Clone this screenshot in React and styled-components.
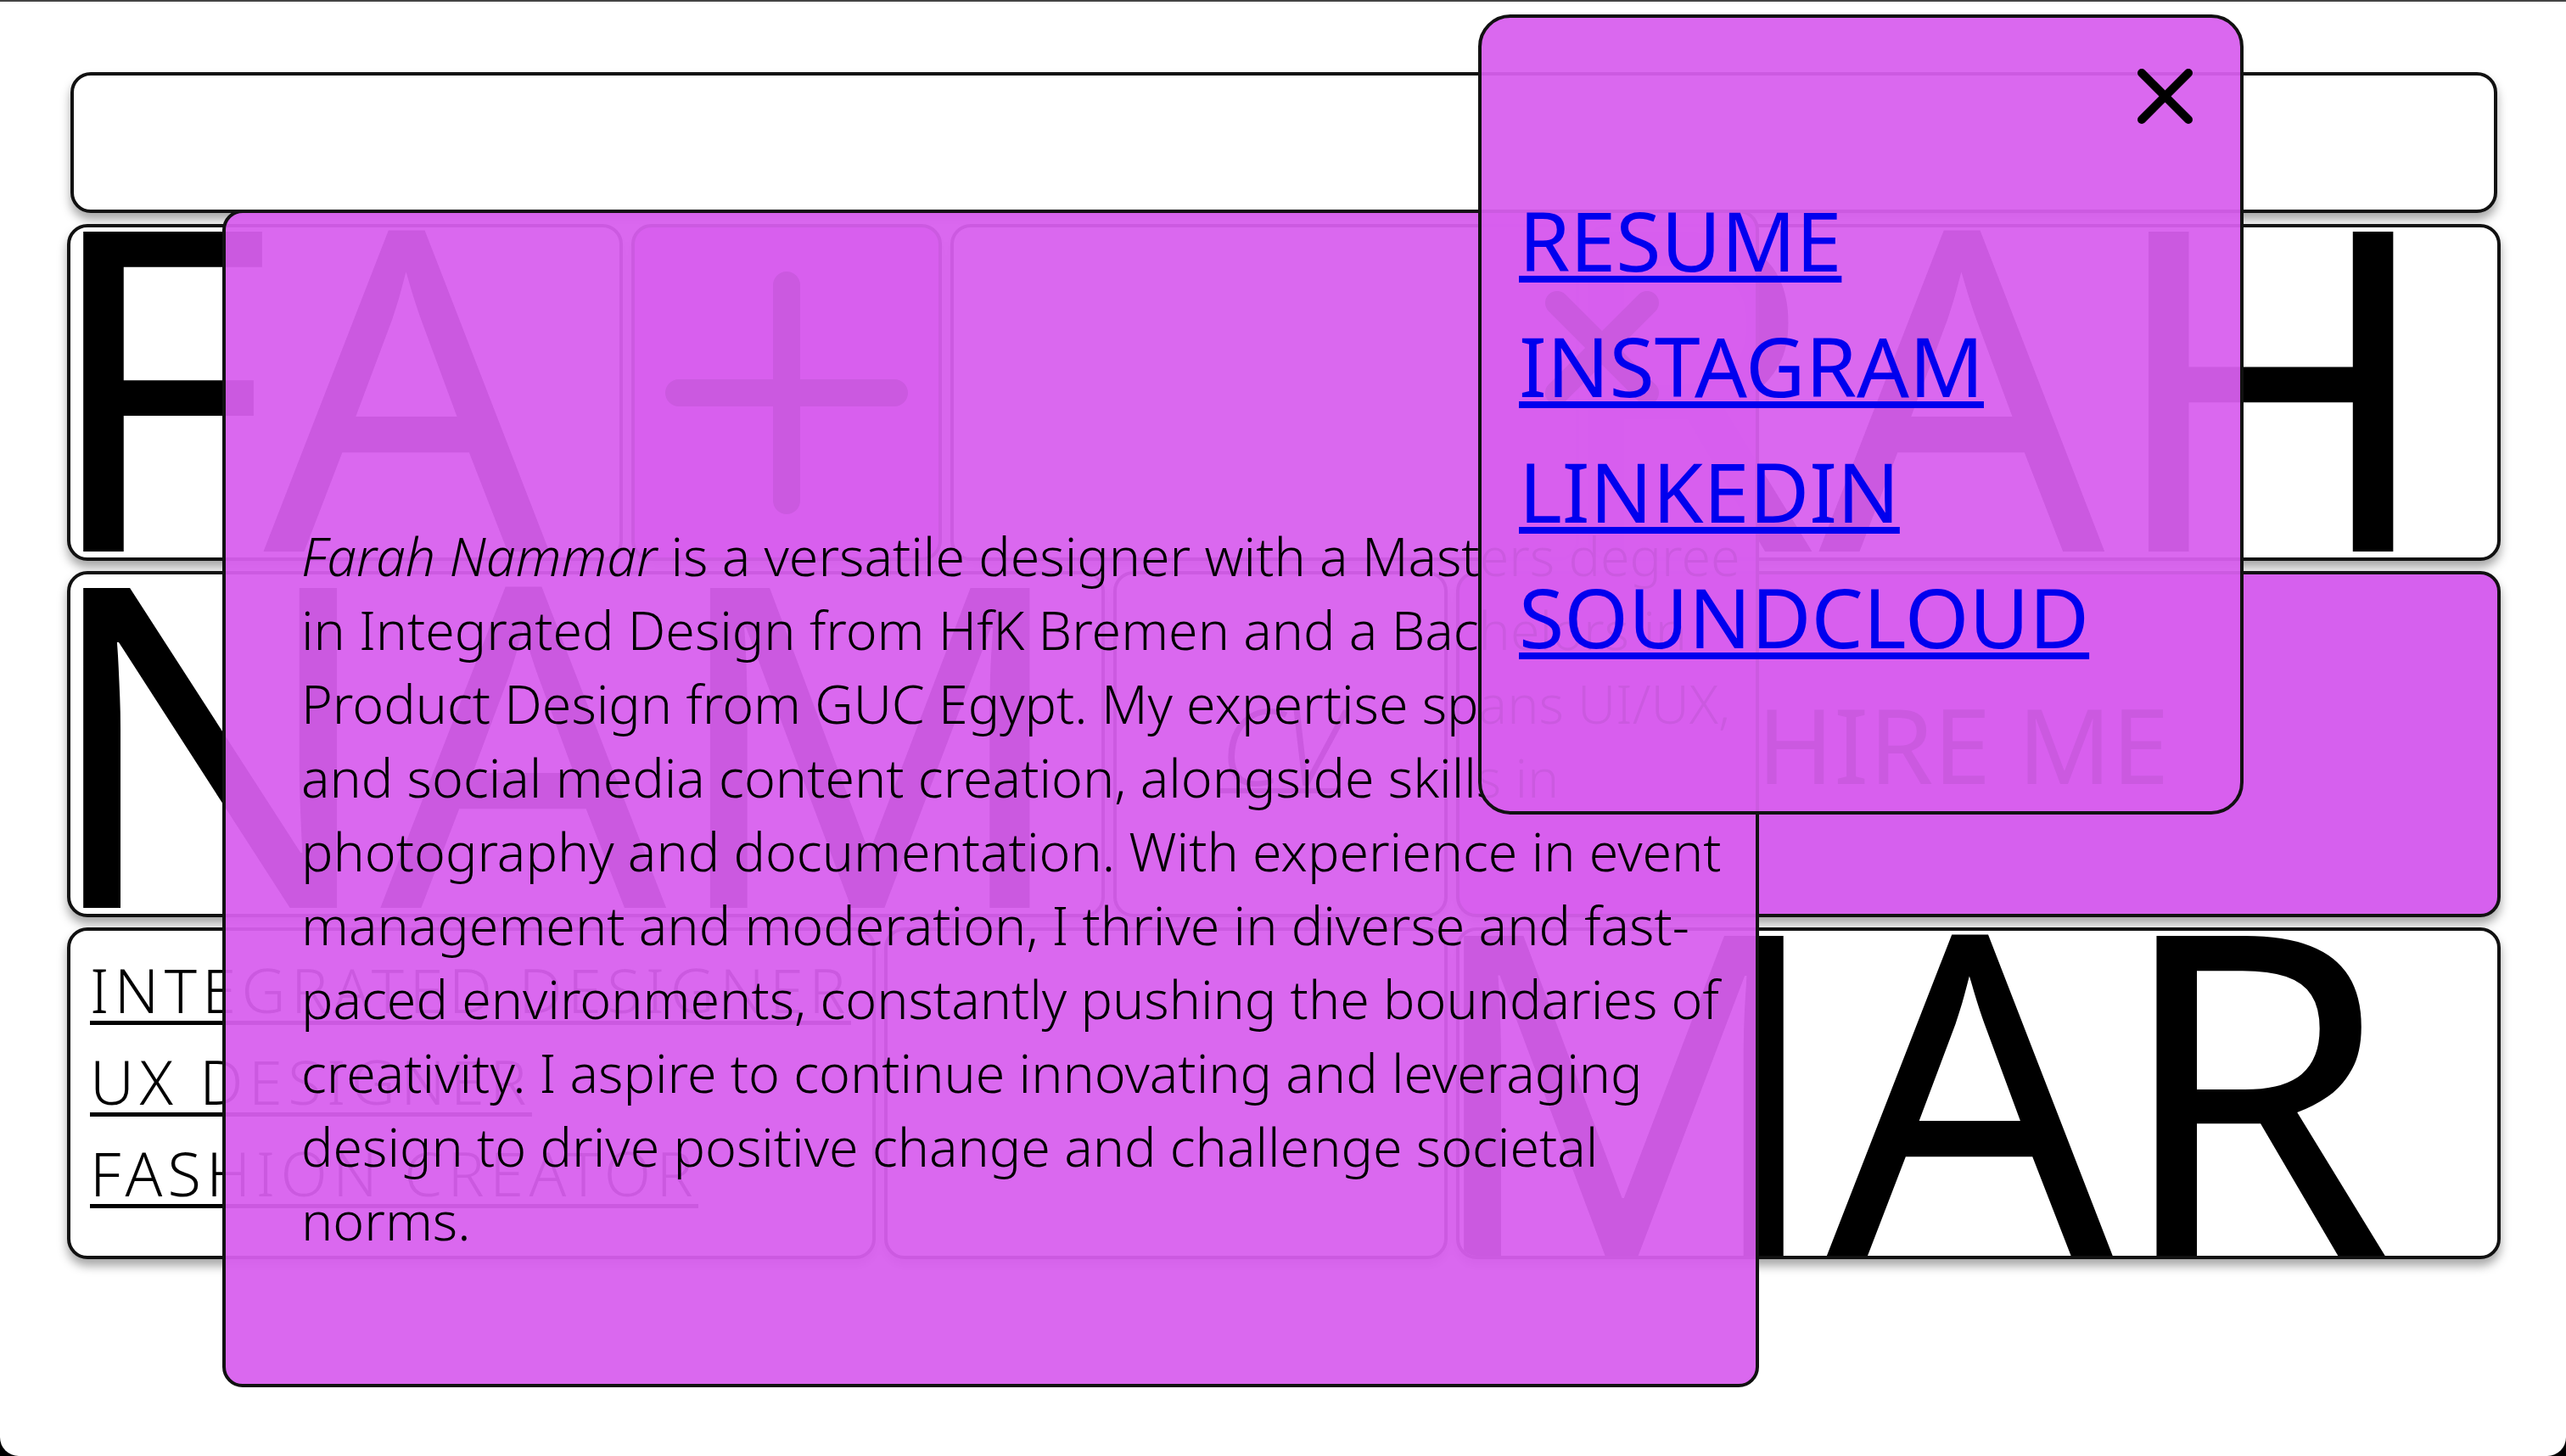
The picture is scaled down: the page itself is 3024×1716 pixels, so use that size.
import React from 'react';
import styled, { createGlobalStyle } from 'styled-components';

const MAGENTA = '#d660ee';
const VEIL = 'rgba(216, 95, 238, 0.94)';
const INK = '#111';

const GlobalStyle = createGlobalStyle`
  html, body {
    margin: 0;
    padding: 0;
    background: #000;
  }
  body {
    font-family: 'Noto Sans', 'Open Sans', sans-serif;
  }
  *, *::before, *::after {
    box-sizing: border-box;
  }
`;

const Screen = styled.div`
  position: relative;
  width: 3024px;
  height: 1716px;
  overflow: hidden;
  padding: 83px 77px 0 79px;
  background: #fff;
  border-top: 2px solid #444;
  border-radius: 0 0 22px 22px;
`;

const TopBar = styled.header`
  height: 166px;
  margin: 0 4px 13px;
  background: #fff;
  border: 4px solid ${INK};
  border-radius: 24px;
  box-shadow: 0 8px 12px rgba(0, 0, 0, 0.35);
`;

const Grid = styled.main`
  display: flex;
  flex-direction: column;
  gap: 12px;
`;

const Row = styled.div`
  display: flex;
  gap: 10px;
  height: ${(p) => p.$h}px;
`;

const Cell = styled.div`
  flex: 0 0 ${(p) => p.$w}px;
  display: flex;
  align-items: ${(p) => p.$align || 'flex-end'};
  justify-content: ${(p) => p.$justify || 'flex-start'};
  overflow: hidden;
  background: ${(p) => p.$bg || '#fff'};
  border: 4px solid ${INK};
  border-radius: 24px;
  box-shadow: 0 8px 12px rgba(0, 0, 0, 0.35);
`;

const Word = styled.span`
  margin-left: ${(p) => p.$shift}px;
  margin-bottom: ${(p) => p.$drop || 0}px;
  font-size: 528px;
  font-weight: 400;
  line-height: 0.8;
  color: #000;
  white-space: nowrap;
`;

const RoleList = styled.nav`
  display: flex;
  flex-direction: column;
  align-items: flex-start;
  padding: 15px 0 0 23px;
`;

const RoleLink = styled.a`
  font-size: 72px;
  font-weight: 300;
  line-height: 108px;
  letter-spacing: 6.4px;
  color: #000;
  text-decoration: underline;
  text-decoration-thickness: 5px;
  text-underline-offset: 9px;
`;

const HireText = styled.span`
  margin-right: 36px;
  font-size: 122px;
  font-weight: 400;
  line-height: 1;
  color: #000;
`;

const CvLink = styled.a`
  font-size: 126px;
  font-style: italic;
  font-weight: 300;
  line-height: 1;
  color: #000;
  text-decoration-thickness: 6px;
`;

const AboutCard = styled.section`
  position: absolute;
  left: 262px;
  top: 245px;
  z-index: 1;
  width: 1811px;
  height: 1388px;
  display: flex;
  flex-direction: column;
  padding: 92px 0 0 89px;
  background: ${VEIL};
  border: 4px solid ${INK};
  border-radius: 24px;
`;

const LinksCard = styled.aside`
  position: absolute;
  left: 1742px;
  top: 15px;
  z-index: 2;
  width: 902px;
  height: 943px;
  display: flex;
  flex-direction: column;
  padding: 60px 0 0 44px;
  background: ${VEIL};
  border: 4px solid ${INK};
  border-radius: 38px;
`;

const CloseButton = styled.button`
  align-self: flex-end;
  display: flex;
  margin-right: ${(p) => p.$right}px;
  padding: 0;
  background: none;
  border: 0;
  cursor: pointer;
`;

const Bio = styled.p`
  margin: 134px 0 0;
  font-size: 62.6px;
  font-weight: 300;
  line-height: 87px;
  color: #000;
`;

const LinkList = styled.nav`
  display: flex;
  flex-direction: column;
  align-items: flex-start;
  margin-top: 62px;
`;

const SocialLink = styled.a`
  font-size: 97px;
  font-weight: 400;
  line-height: 148px;
  color: #0000ee;
  text-decoration: underline;
  text-decoration-thickness: 8px;
  text-underline-offset: 5px;
`;

function CrossIcon({ size, stroke }) {
  const a = stroke / 2;
  const b = size - stroke / 2;
  return (
    <svg width={size} height={size} viewBox={`0 0 ${size} ${size}`} fill="none"
      stroke="#000" strokeWidth={stroke} strokeLinecap="round">
      <path d={`M${a} ${a}L${b} ${b}M${b} ${a}L${a} ${b}`} />
    </svg>
  );
}

function PlusIcon({ size, stroke }) {
  const a = stroke / 2;
  const b = size - stroke / 2;
  const m = size / 2;
  return (
    <svg width={size} height={size} viewBox={`0 0 ${size} ${size}`} fill="none"
      stroke="#000" strokeWidth={stroke} strokeLinecap="round">
      <path d={`M${m} ${a}V${b}M${a} ${m}H${b}`} />
    </svg>
  );
}

const roles = ['INTEGRATED DESIGNER', 'UX DESIGNER', 'FASHION CREATOR'];
const socials = ['RESUME', 'INSTAGRAM', 'LINKEDIN', 'SOUNDCLOUD'];

export default function App() {
  return (
    <>
      <GlobalStyle />
      <Screen>
        <TopBar />
        <Grid>
          <Row $h={397}>
            <Cell $w={655}><Word $shift={-36}>FA</Word></Cell>
            <Cell $w={366} $bg={MAGENTA} $align="center" $justify="center">
              <PlusIcon size={286} stroke={32} />
            </Cell>
            <Cell $w={741} />
            <Cell $w={1076}><Word $shift={-60}>RAH</Word></Cell>
          </Row>
          <Row $h={408}>
            <Cell $w={1223}><Word $shift={-36}>NAM</Word></Cell>
            <Cell $w={394} $align="center" $justify="center">
              <CvLink href="#cv">CV</CvLink>
            </Cell>
            <Cell $w={1231} $bg={MAGENTA} $align="center" $justify="center">
              <HireText>HIRE ME</HireText>
            </Cell>
          </Row>
          <Row $h={391}>
            <Cell $w={953} $align="flex-start">
              <RoleList>
                {roles.map((r) => (
                  <RoleLink key={r} href="#work">{r}</RoleLink>
                ))}
              </RoleList>
            </Cell>
            <Cell $w={664} />
            <Cell $w={1231}><Word $shift={-46} $drop={-7}>MAR</Word></Cell>
          </Row>
        </Grid>

        <AboutCard>
          <CloseButton $right={114} aria-label="Close">
            <CrossIcon size={134} stroke={28} />
          </CloseButton>
          <Bio>
            <em>Farah Nammar</em> is a versatile designer with a Masters degree in Integrated
            Design from HfK Bremen and a Bachelors in Product Design from GUC Egypt. My
            expertise spans UI/UX, and social media content creation, alongside skills in
            photography and documentation. With experience in event management and
            moderation, I thrive in diverse and fast-paced environments, constantly pushing
            the boundaries of creativity. I aspire to continue innovating and leveraging
            design to drive positive change and challenge societal norms.
          </Bio>
        </AboutCard>

        <LinksCard>
          <CloseButton $right={56} aria-label="Close">
            <CrossIcon size={65} stroke={10} />
          </CloseButton>
          <LinkList>
            {socials.map((s) => (
              <SocialLink key={s} href="#link">{s}</SocialLink>
            ))}
          </LinkList>
        </LinksCard>
      </Screen>
    </>
  );
}
